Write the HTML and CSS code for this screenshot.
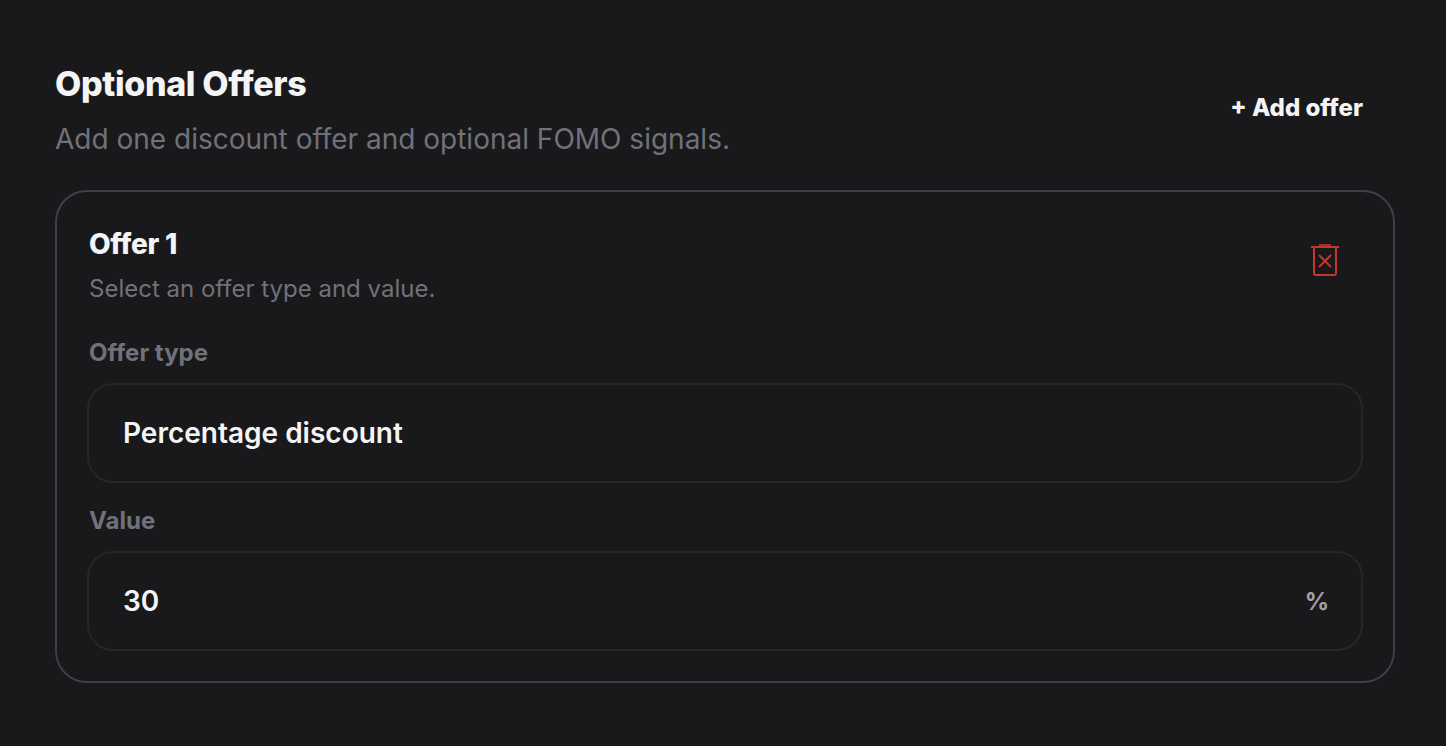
FILE: index.html
```html
<!DOCTYPE html>
<html lang="en">
<head>
  <meta charset="UTF-8" />
  <meta name="viewport" content="width=device-width, initial-scale=1.0"/>
  <title>Optional Offers</title>
  <link rel="stylesheet" href="styles.css">
</head>
<body>
  <section class="offers">
    <header class="offers-header">
      <div>
        <h2 class="offers-title">Optional Offers</h2>
        <p class="offers-subtitle">Add one discount offer and optional FOMO signals.</p>
      </div>
      <button type="button" class="add-btn">+ Add offer</button>
    </header>

    <div class="card">
      <div class="card-header">
        <div>
          <h3 class="card-title">Offer 1</h3>
          <p class="card-subtitle">Select an offer type and value.</p>
        </div>
        <button type="button" class="delete-btn" aria-label="Remove offer">
          <svg width="28" height="32" viewBox="0 0 28 32" fill="none" stroke="currentColor" stroke-width="2">
            <path d="M8 1H20" opacity="0.8"/>
            <path d="M0 3H28"/>
            <path d="M3 3V29a2 2 0 0 0 2 2H23a2 2 0 0 0 2-2V3"/>
            <path d="M8 11L20 23M20 11L8 23"/>
          </svg>
        </button>
      </div>

      <label class="label" for="offerType">Offer type</label>
      <div class="field">
        <select id="offerType" class="control">
          <option>Percentage discount</option>
        </select>
      </div>

      <label class="label" for="offerValue">Value</label>
      <div class="field">
        <input id="offerValue" class="control" type="text" inputmode="numeric" value="30">
        <span class="unit">%</span>
      </div>
    </div>
  </section>
</body>
</html>
```
FILE: styles.css
```css
* {
  box-sizing: border-box;
}

body {
  margin: 0;
  background: #19191b;
  color: #f4f4f5;
  font-family: Inter, sans-serif;
  font-optical-sizing: none;
}

h2,
h3,
p {
  margin: 0;
}

button {
  border: 0;
  padding: 0;
  background: none;
  font-family: inherit;
  cursor: pointer;
}

.offers {
  padding: 60px 51px 60px 55px;
}

.offers-header,
.card-header {
  display: flex;
  align-items: center;
  justify-content: space-between;
}

.offers-header {
  padding-right: 32px;
  margin-bottom: 31px;
}

.offers-title {
  font-size: 34px;
  font-weight: 800;
  line-height: 48px;
  letter-spacing: -0.01em;
}

.offers-subtitle {
  margin-top: 11px;
  color: #71717a;
  font-size: 28px;
  line-height: 40px;
}

.add-btn {
  padding-bottom: 4px;
  color: #f4f4f5;
  font-size: 24px;
  font-weight: 800;
  line-height: 32px;
}

.card {
  padding: 30px;
  border: 2px solid #3f3f46;
  border-radius: 32px;
}

.card-header {
  padding: 0 24px 0 2px;
  margin-bottom: 32px;
}

.card-title {
  font-size: 28px;
  font-weight: 800;
  line-height: 44px;
  letter-spacing: -0.01em;
}

.card-subtitle {
  margin-top: 7px;
  color: #71717a;
  font-size: 24px;
  line-height: 32px;
}

.delete-btn {
  padding-bottom: 8px;
  color: #c0392b;
}

.delete-btn svg {
  display: block;
}

.label {
  display: block;
  margin-bottom: 14px;
  padding-left: 2px;
  color: #71717a;
  font-size: 24px;
  font-weight: 700;
  line-height: 32px;
}

.field {
  display: flex;
  align-items: center;
  height: 100px;
  padding: 0 32px 0 34px;
  border: 2px solid #27272a;
  border-radius: 26px;
}

.field + .label {
  margin-top: 22px;
}

.control {
  flex: 1;
  min-width: 0;
  height: 100%;
  padding: 0;
  border: 0;
  outline: 0;
  appearance: none;
  background: transparent;
  color: #f4f4f5;
  font-family: inherit;
  font-size: 28px;
  font-weight: 600;
}

.unit {
  color: #a1a1aa;
  font-size: 24px;
  font-weight: 700;
}
```
